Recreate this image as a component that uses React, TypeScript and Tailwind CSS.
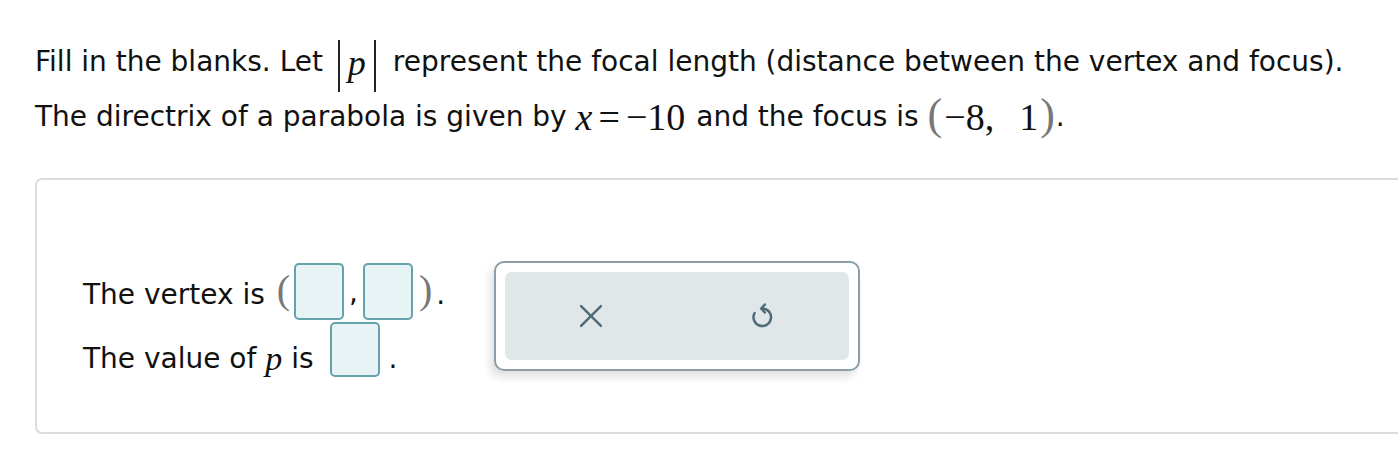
import React from "react";

const sans = { fontFamily: '"DejaVu Sans", Verdana, sans-serif' };

function Blank({ h = "h-[57px]" }: { h?: string }) {
    return <span className={`inline-block w-[50px] ${h} rounded-[5px] border-2 border-[#64a2ae] bg-[#e8f3f6]`} />;
}

function UndoIcon() {
    return (
        <svg width="30" height="30" viewBox="0 0 24 24" fill="none" stroke="#4d6b78" strokeWidth="2" strokeLinecap="round" strokeLinejoin="round">
            <path d="M11.5 6 A7 7 0 1 1 5.3 9.6" />
            <path d="M13.5 2.8 L10.5 6 L13.5 9.2" />
        </svg>
    );
}

function XIcon() {
    return (
        <svg width="28" height="28" viewBox="0 0 24 24" fill="none" stroke="#4d6b78" strokeWidth="2.1" strokeLinecap="round">
            <path d="M3.5 3.5 L20.5 20.5" />
            <path d="M20.5 3.5 L3.5 20.5" />
        </svg>
    );
}

export default function App() {
    return (
        <div className="w-[1398px] h-[466px] overflow-hidden bg-white text-[#111] text-[28px]" style={sans}>
            <div className="pl-[35px] pt-[36px]">
                {/* question text */}
                <div className="flex items-center h-[52px] whitespace-pre">
                    <span>Fill in the blanks. Let </span>
                    <span className="inline-flex items-center h-[52px] mt-[8px] px-[8px] ml-[6px] mr-[17px] border-l-2 border-r-2 border-[#222] font-['Liberation_Serif'] italic text-[36px]">
                        <span className="-mt-[6px]">p</span>
                    </span>
                    <span>represent the focal length (distance between the vertex and focus).</span>
                </div>
                <div className="flex items-center h-[52px] mt-[3px] whitespace-pre">
                    <span>The directrix of a parabola is given by </span>
                    <span className="font-['Liberation_Serif'] text-[38px]">
                        <i>x</i>
                        <span className="mx-[6px]">=</span>
                        <span>−10</span>
                    </span>
                    <span className="ml-[2px]"> and the focus is </span>
                    <span className="font-['Liberation_Serif'] text-[38px] flex items-center">
                        <span className="text-[44px] text-[#777] -mt-[4px]">(</span>
                        <span className="ml-[2px]">−8,</span>
                        <span className="ml-[25px]">1</span>
                        <span className="text-[44px] text-[#777] -mt-[4px] ml-[2px]">)</span>
                    </span>
                    <span className="ml-[1px]">.</span>
                </div>

                {/* answer area */}
                <div className="mt-[35px] w-[1400px] h-[256px] rounded-[7px] border-2 border-[#d6dcdf] pt-[81px] pl-[46px] flex items-start">
                    <div className="w-[411px] pt-[2px] flex flex-col gap-[8px]">
                        <div className="flex items-center h-[57px] whitespace-pre">
                            <span className="mt-[6px]">The vertex is </span>
                            <span className="font-['Liberation_Serif'] text-[40px] text-[#777] -mt-[4px] ml-[3px] mr-[4px]">(</span>
                            <Blank />
                            <span className="self-end mb-[6px] mx-[5px]">,</span>
                            <Blank />
                            <span className="font-['Liberation_Serif'] text-[40px] text-[#777] -mt-[4px] ml-[6px]">)</span>
                            <span className="ml-[4px] mt-[6px]">.</span>
                        </div>
                        <div className="flex items-center h-[55px] whitespace-pre">
                            <span className="mt-[6px]">The value of </span>
                            <span className="font-['Liberation_Serif'] italic text-[34px] mt-[6px]">p</span>
                            <span className="mt-[6px]"> is </span>
                            <span className="ml-[8px]"><Blank h="h-[55px]" /></span>
                            <span className="ml-[8px] mt-[6px]">.</span>
                        </div>
                    </div>
                    <div className="w-[366px] h-[110px] rounded-[10px] border-2 border-[#8b9ea7] p-[9px] shadow-[-4px_6px_8px_rgba(0,0,0,0.12)]">
                        <div className="h-full rounded-[7px] bg-[#e1e6e9] grid grid-cols-2 place-items-center">
                            <XIcon />
                            <UndoIcon />
                        </div>
                    </div>
                </div>
            </div>
        </div>
    );
}
